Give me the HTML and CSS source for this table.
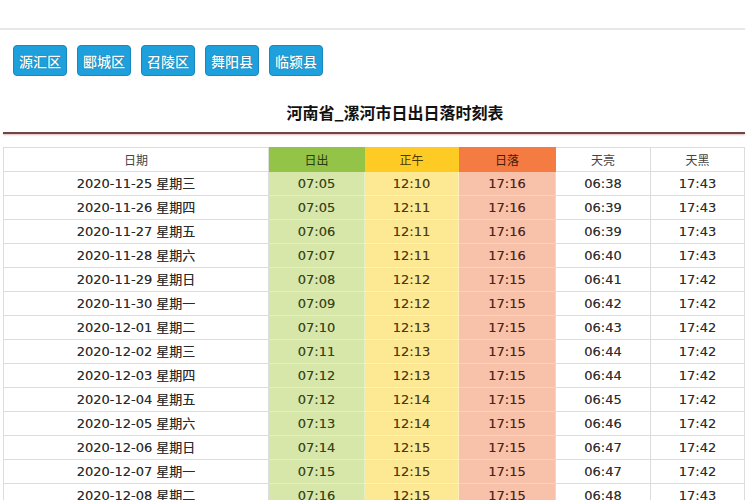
FILE: index.html
```html
<!DOCTYPE html>
<html lang="zh">
<head>
<meta charset="utf-8">
<link rel="stylesheet" href="styles.css">
</head>
<body>
<div class="page">
  <div class="topbar"></div>
  <nav class="areas">
    <a class="area">源汇区</a>
    <a class="area">郾城区</a>
    <a class="area">召陵区</a>
    <a class="area">舞阳县</a>
    <a class="area">临颍县</a>
  </nav>
  <h1 class="title">河南省_漯河市日出日落时刻表</h1>
  <div class="rule"></div>
  <table class="sun">
    <colgroup>
      <col class="c-date"><col class="c-rise"><col class="c-noon"><col class="c-set"><col class="c-dawn"><col>
    </colgroup>
    <thead>
      <tr>
        <th>日期</th>
        <th class="h-rise">日出</th>
        <th class="h-noon">正午</th>
        <th class="h-set">日落</th>
        <th>天亮</th>
        <th>天黑</th>
      </tr>
    </thead>
    <tbody>
      <tr><td class="d">2020-11-25 星期三</td><td class="b-rise">07:05</td><td class="b-noon">12:10</td><td class="b-set">17:16</td><td>06:38</td><td>17:43</td></tr>
      <tr><td class="d">2020-11-26 星期四</td><td class="b-rise">07:05</td><td class="b-noon">12:11</td><td class="b-set">17:16</td><td>06:39</td><td>17:43</td></tr>
      <tr><td class="d">2020-11-27 星期五</td><td class="b-rise">07:06</td><td class="b-noon">12:11</td><td class="b-set">17:16</td><td>06:39</td><td>17:43</td></tr>
      <tr><td class="d">2020-11-28 星期六</td><td class="b-rise">07:07</td><td class="b-noon">12:11</td><td class="b-set">17:16</td><td>06:40</td><td>17:43</td></tr>
      <tr><td class="d">2020-11-29 星期日</td><td class="b-rise">07:08</td><td class="b-noon">12:12</td><td class="b-set">17:15</td><td>06:41</td><td>17:42</td></tr>
      <tr><td class="d">2020-11-30 星期一</td><td class="b-rise">07:09</td><td class="b-noon">12:12</td><td class="b-set">17:15</td><td>06:42</td><td>17:42</td></tr>
      <tr><td class="d">2020-12-01 星期二</td><td class="b-rise">07:10</td><td class="b-noon">12:13</td><td class="b-set">17:15</td><td>06:43</td><td>17:42</td></tr>
      <tr><td class="d">2020-12-02 星期三</td><td class="b-rise">07:11</td><td class="b-noon">12:13</td><td class="b-set">17:15</td><td>06:44</td><td>17:42</td></tr>
      <tr><td class="d">2020-12-03 星期四</td><td class="b-rise">07:12</td><td class="b-noon">12:13</td><td class="b-set">17:15</td><td>06:44</td><td>17:42</td></tr>
      <tr><td class="d">2020-12-04 星期五</td><td class="b-rise">07:12</td><td class="b-noon">12:14</td><td class="b-set">17:15</td><td>06:45</td><td>17:42</td></tr>
      <tr><td class="d">2020-12-05 星期六</td><td class="b-rise">07:13</td><td class="b-noon">12:14</td><td class="b-set">17:15</td><td>06:46</td><td>17:42</td></tr>
      <tr><td class="d">2020-12-06 星期日</td><td class="b-rise">07:14</td><td class="b-noon">12:15</td><td class="b-set">17:15</td><td>06:47</td><td>17:42</td></tr>
      <tr><td class="d">2020-12-07 星期一</td><td class="b-rise">07:15</td><td class="b-noon">12:15</td><td class="b-set">17:15</td><td>06:47</td><td>17:42</td></tr>
      <tr><td class="d">2020-12-08 星期二</td><td class="b-rise">07:16</td><td class="b-noon">12:15</td><td class="b-set">17:15</td><td>06:48</td><td>17:43</td></tr>
    </tbody>
  </table>
</div>
</body>
</html>
```
FILE: styles.css
```css
html, body {
  margin: 0;
  padding: 0;
  background: #fff;
}
body {
  font-family: "DejaVu Sans", "Noto Sans CJK SC", sans-serif;
  color: #333;
  overflow: hidden;
}
.page {
  width: 750px;
}
.topbar {
  height: 28px;
  border-bottom: 2px solid #e8e8e8;
  margin-right: 5px;
}
.areas {
  display: flex;
  gap: 10px;
  padding: 15px 0 0 13px;
  height: 31px;
}
.area {
  display: flex;
  align-items: center;
  justify-content: center;
  width: 54px;
  height: 31px;
  box-sizing: border-box;
  background: #1ea0dc;
  border: 1px solid #1788c0;
  border-radius: 4px;
  color: #fff;
  font-family: "Noto Sans CJK SC", sans-serif;
  font-size: 14px;
  font-weight: 500;
  text-shadow: 0 0 1px #0a5f8a;
}
.title {
  margin: 0;
  padding: 24px 0 0 40px;
  height: 32px;
  text-align: center;
  font-family: "Noto Sans CJK SC", sans-serif;
  font-size: 16px;
  font-weight: bold;
  color: #111;
  line-height: 24px;
}
.rule {
  height: 2px;
  margin: 0 5px 0 3px;
  background: #6e4848;
  box-shadow: 0 1px 2px #d8b8b8;
}
.sun {
  margin: 13px 0 0 3px;
  border-collapse: collapse;
  table-layout: fixed;
  width: 742px;
}
.c-date { width: 265px; }
.c-rise { width: 96px; }
.c-noon { width: 94px; }
.c-set { width: 97px; }
.c-dawn { width: 95px; }
.sun th, .sun td {
  height: 23px;
  padding: 0;
  border: 1px solid #dcdcdc;
  text-align: center;
  font-size: 13px;
  font-weight: normal;
  line-height: 23px;
  color: #2e2e2e;
  white-space: nowrap;
  text-shadow: 0 0 0.6px rgba(0, 0, 0, 0.45);
}
.sun td.d {
  color: #2a2a2a;
}
.sun th {
  font-size: 12px;
  font-family: "Noto Sans CJK SC", sans-serif;
  color: #444;
  text-shadow: none;
}
.sun th.h-rise { background: #94c447; border-color: #94c447; color: #2e3a10; }
.sun th.h-noon { background: #fdcb24; border-color: #fdcb24; color: #4a3a00; }
.sun th.h-set { background: #f47b42; border-color: #f47b42; color: #4a1a08; }
.sun td.b-rise { background: #d6e7a9; border-color: #e4efc4; color: #3a4418; }
.sun td.b-noon { background: #fde894; border-color: #fef0b8; color: #4a3e10; }
.sun td.b-set { background: #f8c1aa; border-color: #fad2c2; color: #4e2418; }
```
